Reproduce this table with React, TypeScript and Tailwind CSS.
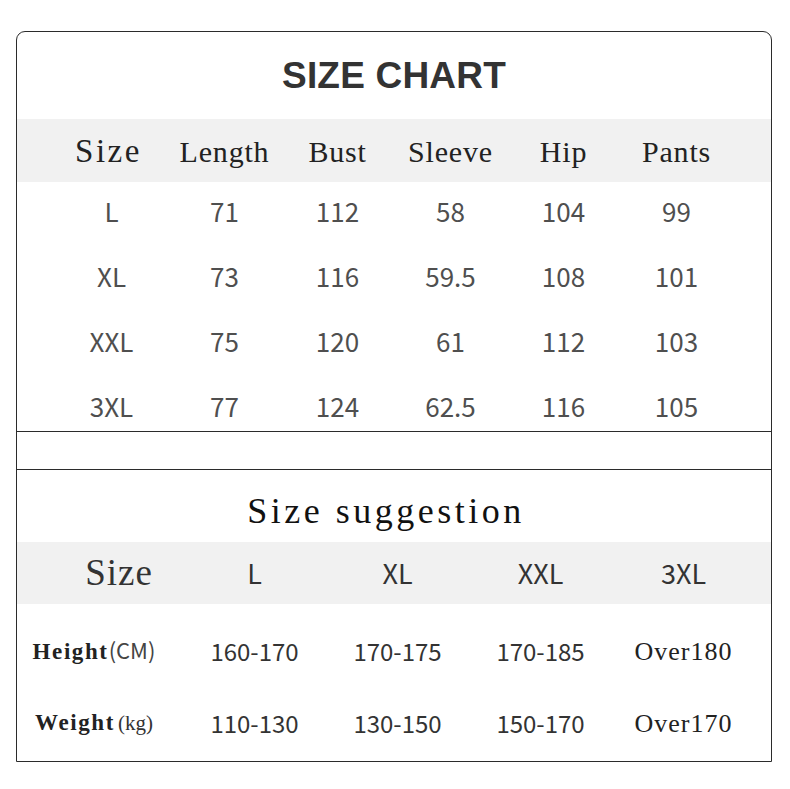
const serif = "font-['Liberation_Serif','Times_New_Roman',serif]";
const sans = "font-['Noto_Sans_CJK_SC','Noto_Sans',sans-serif]";

const chartHead = ['Length', 'Bust', 'Sleeve', 'Hip', 'Pants'];

const chartRows = [
  ['L', '71', '112', '58', '104', '99'],
  ['XL', '73', '116', '59.5', '108', '101'],
  ['XXL', '75', '120', '61', '112', '103'],
  ['3XL', '77', '124', '62.5', '116', '105'],
];

const suggestRows = [
  { label: 'Height', unit: '(CM)', values: ['160-170', '170-175', '170-185', 'Over180'] },
  { label: 'Weight', unit: '(kg)', values: ['110-130', '130-150', '150-170', 'Over170'] },
];

function SizeChart() {
  return (
    <>
      <div className="h-[87px] flex items-center justify-center">
        <h1 className="font-['Liberation_Sans',Arial,sans-serif] font-bold text-[37px] leading-none text-[#333] tracking-[0.2px]">
          SIZE CHART
        </h1>
      </div>

      <div className="h-[63px] bg-[#f1f1f1] grid grid-cols-6 px-[38px] items-center text-[#222] pt-[2px]">
        <div className={`${serif} text-[33px] tracking-[2.5px] text-center pr-[6px]`}>Size</div>
        {chartHead.map((h) => (
          <div key={h} className={`${serif} text-[30px] tracking-[0.8px] text-center`}>
            {h}
          </div>
        ))}
      </div>

      <div className="h-[249px]">
        <div className="-mt-[4px]">
          {chartRows.map((row) => (
            <div key={row[0]} className="h-[65px] grid grid-cols-6 px-[38px] items-center">
              {row.map((v, i) => (
                <div key={i} className={`${sans} text-[26px] leading-none text-center text-[#4f4f4f]`}>
                  {v}
                </div>
              ))}
            </div>
          ))}
        </div>
      </div>
    </>
  );
}

function SizeSuggestion() {
  return (
    <>
      <div className="h-[72px] flex items-center justify-center pt-[9px] pr-[16px]">
        <h2 className={`${serif} text-[36px] leading-none tracking-[3.5px] text-[#111]`}>Size suggestion</h2>
      </div>

      <div className="h-[62px] bg-[#f1f1f1] grid grid-cols-[166px_143px_143px_143px_143px] items-center text-[#333]">
        <div className={`${serif} text-[37px] tracking-[1px] text-center pl-[38px]`}>Size</div>
        {['L', 'XL', 'XXL', '3XL'].map((s) => (
          <div key={s} className={`${sans} text-[27px] text-center`}>
            {s}
          </div>
        ))}
      </div>

      <div className="pt-[11px]">
        {suggestRows.map((r) => (
          <div key={r.label} className="h-[72px] grid grid-cols-[166px_143px_143px_143px_143px] items-center">
            <div className="flex items-baseline justify-center pr-[12px] whitespace-nowrap">
              <span className={`${serif} font-bold text-[23px] text-[#222] tracking-[1.6px]`}>{r.label}</span>
              {r.unit === '(CM)' ? (
                <span className={`${sans} text-[22px] text-[#444]`}>{r.unit}</span>
              ) : (
                <span className={`${serif} text-[21px] text-[#333] ml-[3px]`}>{r.unit}</span>
              )}
            </div>
            {r.values.map((v, i) =>
              i === 3 ? (
                <div key={i} className={`${serif} text-[26px] tracking-[1px] text-center text-[#222]`}>
                  {v}
                </div>
              ) : (
                <div key={i} className={`${sans} text-[24px] text-center text-[#333]`}>
                  {v}
                </div>
              ),
            )}
          </div>
        ))}
      </div>
    </>
  );
}

export default function App() {
  return (
    <div className="w-[790px] h-[789px] bg-white pt-[31px] pl-[16px]">
      <div className="w-[756px] h-[731px] border-[1.5px] border-[#2b2b2b] rounded-t-[9px] overflow-hidden flex flex-col">
        <SizeChart />
        <div className="h-[39px] border-y-[1.5px] border-[#2b2b2b]" />
        <SizeSuggestion />
      </div>
    </div>
  );
}
